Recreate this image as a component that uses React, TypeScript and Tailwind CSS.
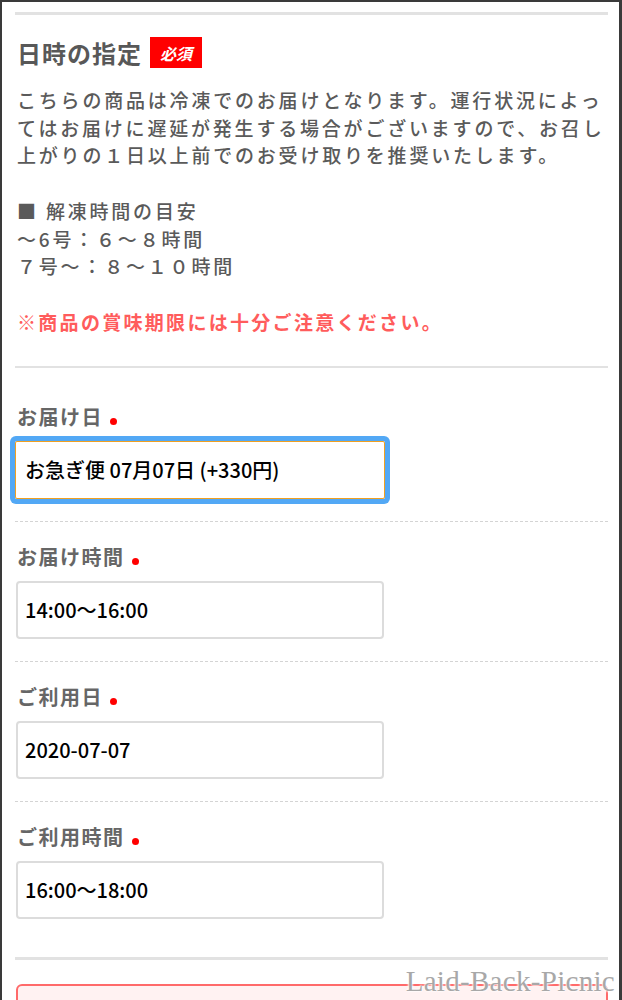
import React from "react";

const jp = { fontFamily: '"Noto Sans CJK JP", "Noto Sans", sans-serif' };

function Field({ label, value, focused, last }: { label: string; value: string; focused?: boolean; last?: boolean }) {
  return (
    <div className={last ? "pt-[21px]" : "pt-[21px] pb-[22px] border-b border-dashed border-[#d4d4d4]"}>
      <div className="flex items-center h-[28px] text-[20px] font-bold text-[#666] tracking-[1.5px] leading-[28px] ml-[2px]">
        <span>{label}</span>
        <span className="ml-[7px] mt-[8px] w-[7px] h-[7px] rounded-full bg-[#ff0000]" />
      </div>
      <div
        className={
          focused
            ? "mt-[10px] w-[370px] h-[58px] ml-[0px] flex items-center pl-[9px] text-[20px] font-medium text-black border border-[#f0a020] rounded-[2px] ring-[5px] ring-[#52a8f5]"
            : "mt-[10px] w-[368px] h-[58px] ml-[1px] flex items-center pl-[7px] text-[20px] font-medium text-black border-2 border-[#dcdcdc] rounded-[4px]"
        }
      >
        {value}
      </div>
    </div>
  );
}

export default function App() {
  return (
    <div
      className="relative w-[622px] h-[1000px] overflow-hidden bg-white border-l-2 border-t-2 border-r-[3px] border-[#3a3a3a]"
      style={jp}
    >
      <div className="px-[13px] pr-[11px]">
        <div className="mt-[10px] h-[3px] bg-[#e2e2e2]" />
        <div className="mt-[22px] flex items-center h-[31px]">
          <span className="text-[24px] font-bold text-[#585858] leading-[31px] ml-[2px] tracking-[1px]">日時の指定</span>
          <span className="ml-[8px] h-[31px] w-[52px] flex items-center justify-center bg-[#ff0000] text-white text-[16px] font-bold italic">
            必須
          </span>
        </div>
        <div className="mt-[18px] ml-[2px] text-[19px] font-medium text-[#5a5a5a] tracking-[2.8px] leading-[27.7px] whitespace-nowrap">
          <div>こちらの商品は冷凍でのお届けとなります。運行状況によっ</div>
          <div>てはお届けに遅延が発生する場合がございますので、お召し</div>
          <div>上がりの１日以上前でのお受け取りを推奨いたします。</div>
          <div>&nbsp;</div>
          <div>■ 解凍時間の目安</div>
          <div>～6号：６～８時間</div>
          <div>７号～：８～１０時間</div>
          <div>&nbsp;</div>
          <div className="font-bold text-[#ff5c5c] tracking-[2.3px]">※商品の賞味期限には十分ご注意ください。</div>
        </div>
        <div className="mt-[31px] h-[2px] bg-[#e2e2e2]" />
        <div className="mt-[14px]">
          <Field label="お届け日" value="お急ぎ便 07月07日 (+330円)" focused />
          <Field label="お届け時間" value="14:00～16:00" />
          <Field label="ご利用日" value="2020-07-07" />
          <Field label="ご利用時間" value="16:00～18:00" last />
        </div>
        <div className="mt-[38px] h-[3px] bg-[#e2e2e2]" />
        <div className="mt-[24px] ml-[1px] h-[60px] border-2 border-[#ff6a6a] bg-[#fff2f2] rounded-t-[6px]" />
      </div>
      <div
        className="absolute right-[4px] bottom-[4px] text-[29px] text-[#a8a8a8] leading-none tracking-[0.3px]"
        style={{ fontFamily: '"Liberation Serif", serif', textShadow: "0 0 2px #fff, 0 0 2px #fff, 0 0 3px #fff" }}
      >
        Laid-Back-Picnic
      </div>
    </div>
  );
}
